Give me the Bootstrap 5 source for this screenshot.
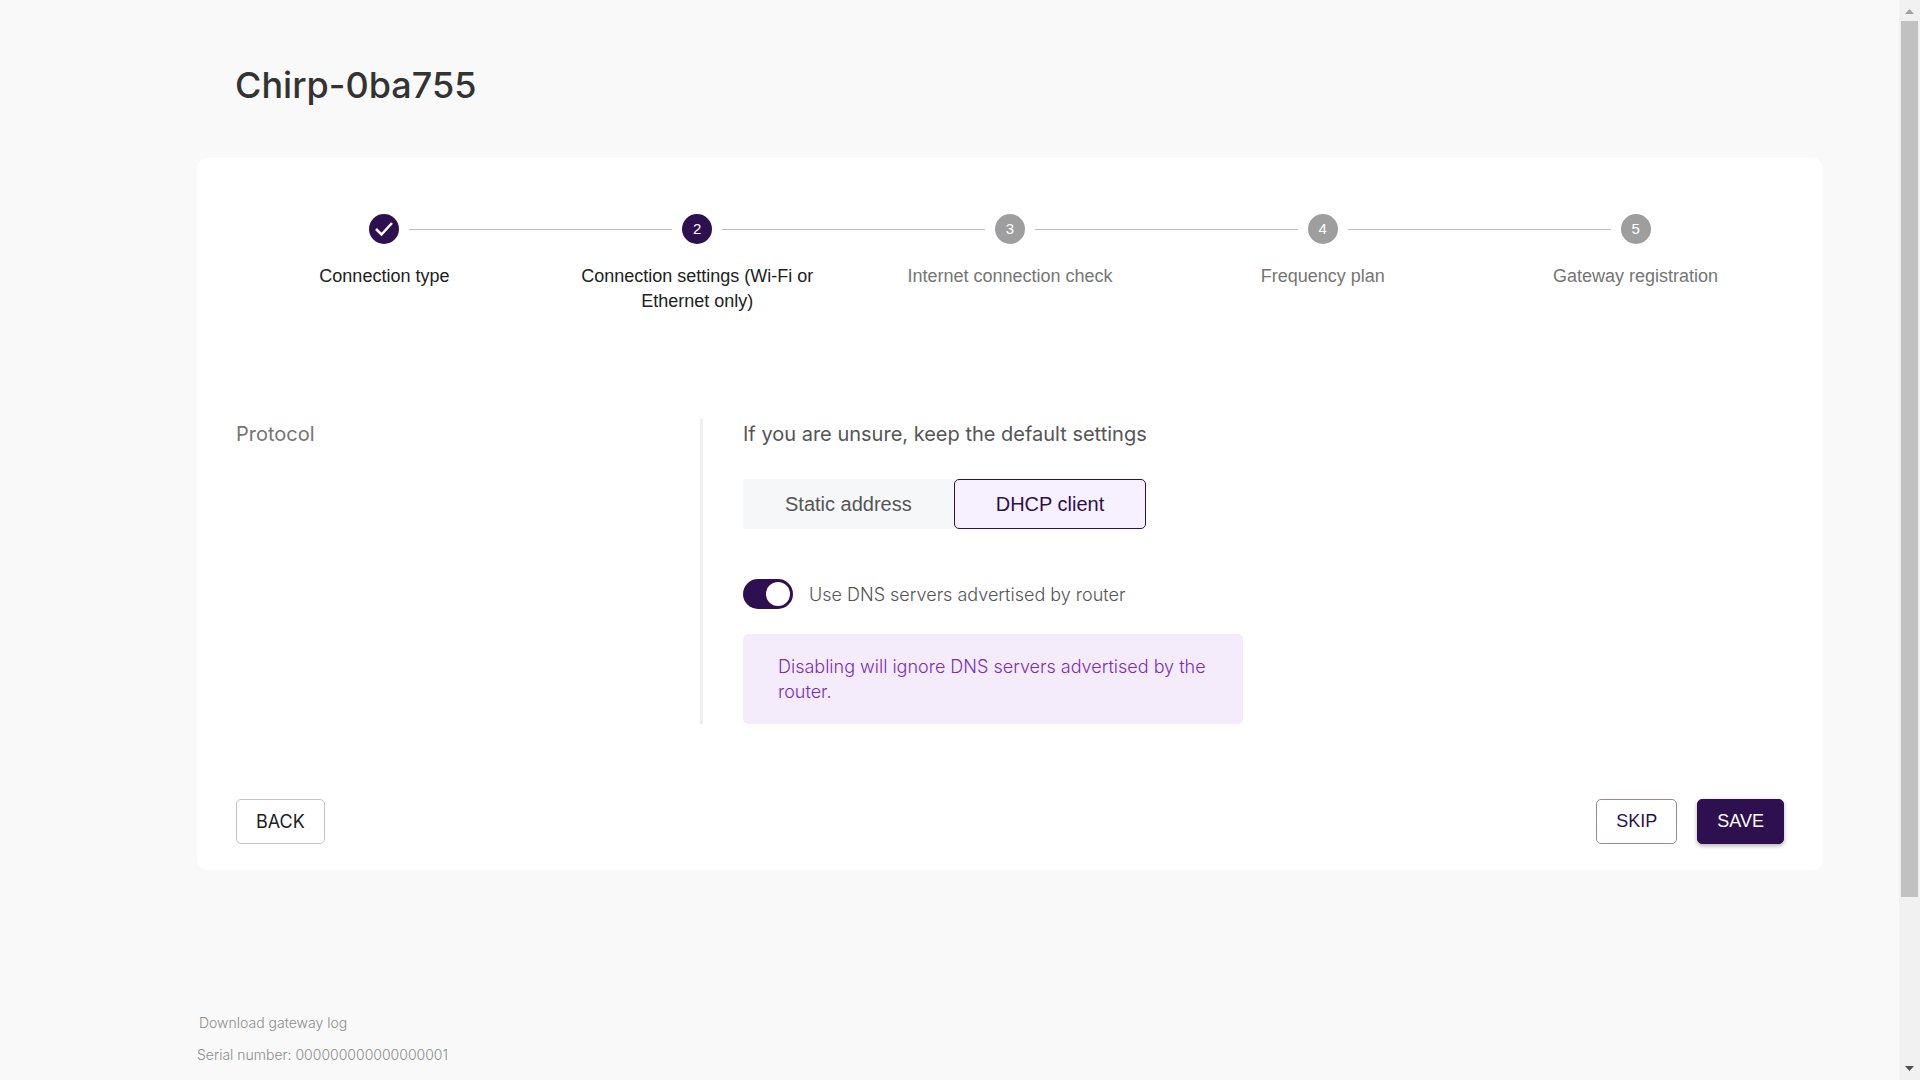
<!DOCTYPE html>
<html lang="en">
<head>
<meta charset="utf-8">
<meta name="viewport" content="width=device-width, initial-scale=1">
<title>Chirp-0ba755</title>
<link href="https://cdn.jsdelivr.net/npm/bootstrap@5.3.0/dist/css/bootstrap.min.css" rel="stylesheet">
<script src="https://cdn.jsdelivr.net/npm/bootstrap@5.3.0/dist/js/bootstrap.bundle.min.js"></script>
<style>
  :root { --brand: #2e0f4f; --muted: #9e9e9e; --bar: 21px; }
  html { scrollbar-width: none; }
  html::-webkit-scrollbar { display: none; }
  body { background: #f9f9f9; color: #555; font-family: Inter, "Liberation Sans", sans-serif; font-size: 18px; line-height: 25px; padding-right: var(--bar); }
  .page-wrap { padding: 60px 76px 0 197px; }
  .page-title { font-size: 36px; line-height: 50px; font-weight: 500; color: #333; margin: 0 0 48px 38px; }
  .panel { background: #fff; border-radius: 10px; padding: 56px 39px 26px; }
  .stepper { list-style: none; padding: 0; margin: 0 -8px; }
  .step-item { flex: 1 1 0; position: relative; padding: 0 10px; text-align: center; font-family: "Liberation Sans", sans-serif; color: #757575; }
  .step-item + .step-item::before { content: ""; position: absolute; top: 15px; left: calc(-50% + 25px); right: calc(50% + 25px); border-top: 1px solid #bdbdbd; }
  .step-dot { width: 30px; height: 30px; border-radius: 50%; background: var(--muted); color: #fff; font-size: 15px; line-height: 30px; margin-bottom: 20px; }
  .step-item.reached { color: #212121; }
  .step-item.reached .step-dot { background: var(--brand); }
  .step-dot svg { display: block; width: 30px; height: 30px; }
  .settings { margin-top: 105px; }
  .settings-label { flex: 0 0 467px; border-right: 3px solid #eee; font-size: 20px; line-height: 30px; color: #757575; }
  .settings-body { padding-left: 40px; }
  .hint { font-size: 20px; line-height: 30px; margin-bottom: 30px; }
  .choice { border: 1px solid #f6f7f9; background: #f6f7f9; border-radius: 0; color: #555; font-family: "Liberation Sans", sans-serif; font-size: 20px; line-height: 30px; padding: 9px 41px; }
  .choice.picked { border-color: var(--brand); background: #f7f0ff; border-radius: 5px; color: var(--brand); }
  .dns-row { margin: 50px 0 25px; min-height: 30px; padding: 0; gap: 16px; font-weight: 300; }
  .dns-row .form-check-input { width: 50px; height: 30px; margin: 0; float: none; border: 0; background-color: var(--brand);
    background-image: url("data:image/svg+xml,%3csvg xmlns='http://www.w3.org/2000/svg' viewBox='0 0 30 30'%3e%3ccircle cx='15' cy='15' r='12' fill='%23fff'/%3e%3c/svg%3e"); }
  .note { width: 500px; max-width: 100%; background: #f4ecfa; border-radius: 5px; color: #7b2cbf; padding: 20px 35px; font-weight: 300; }
  .actions { margin-top: 75px; }
  .act { font-size: 18px; line-height: 31px; padding: 6px 19px; border-radius: 5px; font-family: "Liberation Sans", sans-serif; }
  .act-back { border: 1px solid #c4c4c4; color: #212121; font-family: Inter, sans-serif; }
  .act-skip { border: 1px solid #9687a7; color: var(--brand); }
  .act-save { border: 1px solid var(--brand); background: var(--brand); color: #fff; box-shadow: 0 2px 4px rgba(0,0,0,.3); }
  .action-pair { gap: 20px; }
  .foot { margin-top: 137px; font-size: 14px; line-height: 32px; font-weight: 300; color: #8c8c8c; }
  .foot a { color: inherit; text-decoration: none; padding-left: 2px; }
  .scroll-rail { position: fixed; top: 0; right: 0; bottom: 0; width: var(--bar); background: #f1f1f1; }
  .scroll-rail svg { display: block; width: 21px; height: 21px; }
  .rail-thumb { width: 17px; height: 84.4%; background: #c1c1c1; }
</style>
</head>
<body>
<main class="page-wrap">
  <h1 class="page-title">Chirp-0ba755</h1>
  <section class="panel">
    <ol class="stepper d-flex">
      <li class="step-item reached d-flex flex-column align-items-center"><span class="step-dot"><svg viewBox="0 0 30 30" aria-label="Done"><path d="M7 15l5.500 5.500L23 9" fill="none" stroke="#fff" stroke-width="2.500"/></svg></span><span>Connection type</span></li>
      <li class="step-item reached d-flex flex-column align-items-center"><span class="step-dot">2</span><span>Connection settings (Wi-Fi or Ethernet only)</span></li>
      <li class="step-item d-flex flex-column align-items-center"><span class="step-dot">3</span><span>Internet connection check</span></li>
      <li class="step-item d-flex flex-column align-items-center"><span class="step-dot">4</span><span>Frequency plan</span></li>
      <li class="step-item d-flex flex-column align-items-center"><span class="step-dot">5</span><span>Gateway registration</span></li>
    </ol>
    <div class="settings d-flex">
      <div class="settings-label">Protocol</div>
      <div class="settings-body flex-grow-1">
        <p class="hint">If you are unsure, keep the default settings</p>
        <div class="d-flex">
          <button type="button" class="btn choice">Static address</button>
          <button type="button" class="btn choice picked">DHCP client</button>
        </div>
        <div class="dns-row form-check form-switch d-flex align-items-center">
          <input class="form-check-input" type="checkbox" role="switch" id="dns" checked>
          <label class="form-check-label" for="dns">Use DNS servers advertised by router</label>
        </div>
        <div class="note">Disabling will ignore DNS servers advertised by the router.</div>
      </div>
    </div>
    <div class="actions d-flex justify-content-between">
      <button type="button" class="btn act act-back">BACK</button>
      <div class="action-pair d-flex">
        <button type="button" class="btn act act-skip">SKIP</button>
        <button type="button" class="btn act act-save">SAVE</button>
      </div>
    </div>
  </section>
  <footer class="foot">
    <div><a href="#">Download gateway log</a></div>
    <div>Serial number: 000000000000000001</div>
  </footer>
</main>
<div class="scroll-rail d-flex flex-column align-items-center" aria-hidden="true">
  <svg viewBox="0 0 21 21"><path d="M6 14h9l-4.500-5z" fill="#a3a3a3"/></svg>
  <div class="flex-grow-1 w-100 d-flex justify-content-center"><div class="rail-thumb"></div></div>
  <svg viewBox="0 0 21 21"><path d="M6 7h9l-4.500 5z" fill="#505050"/></svg>
</div>
</body>
</html>
